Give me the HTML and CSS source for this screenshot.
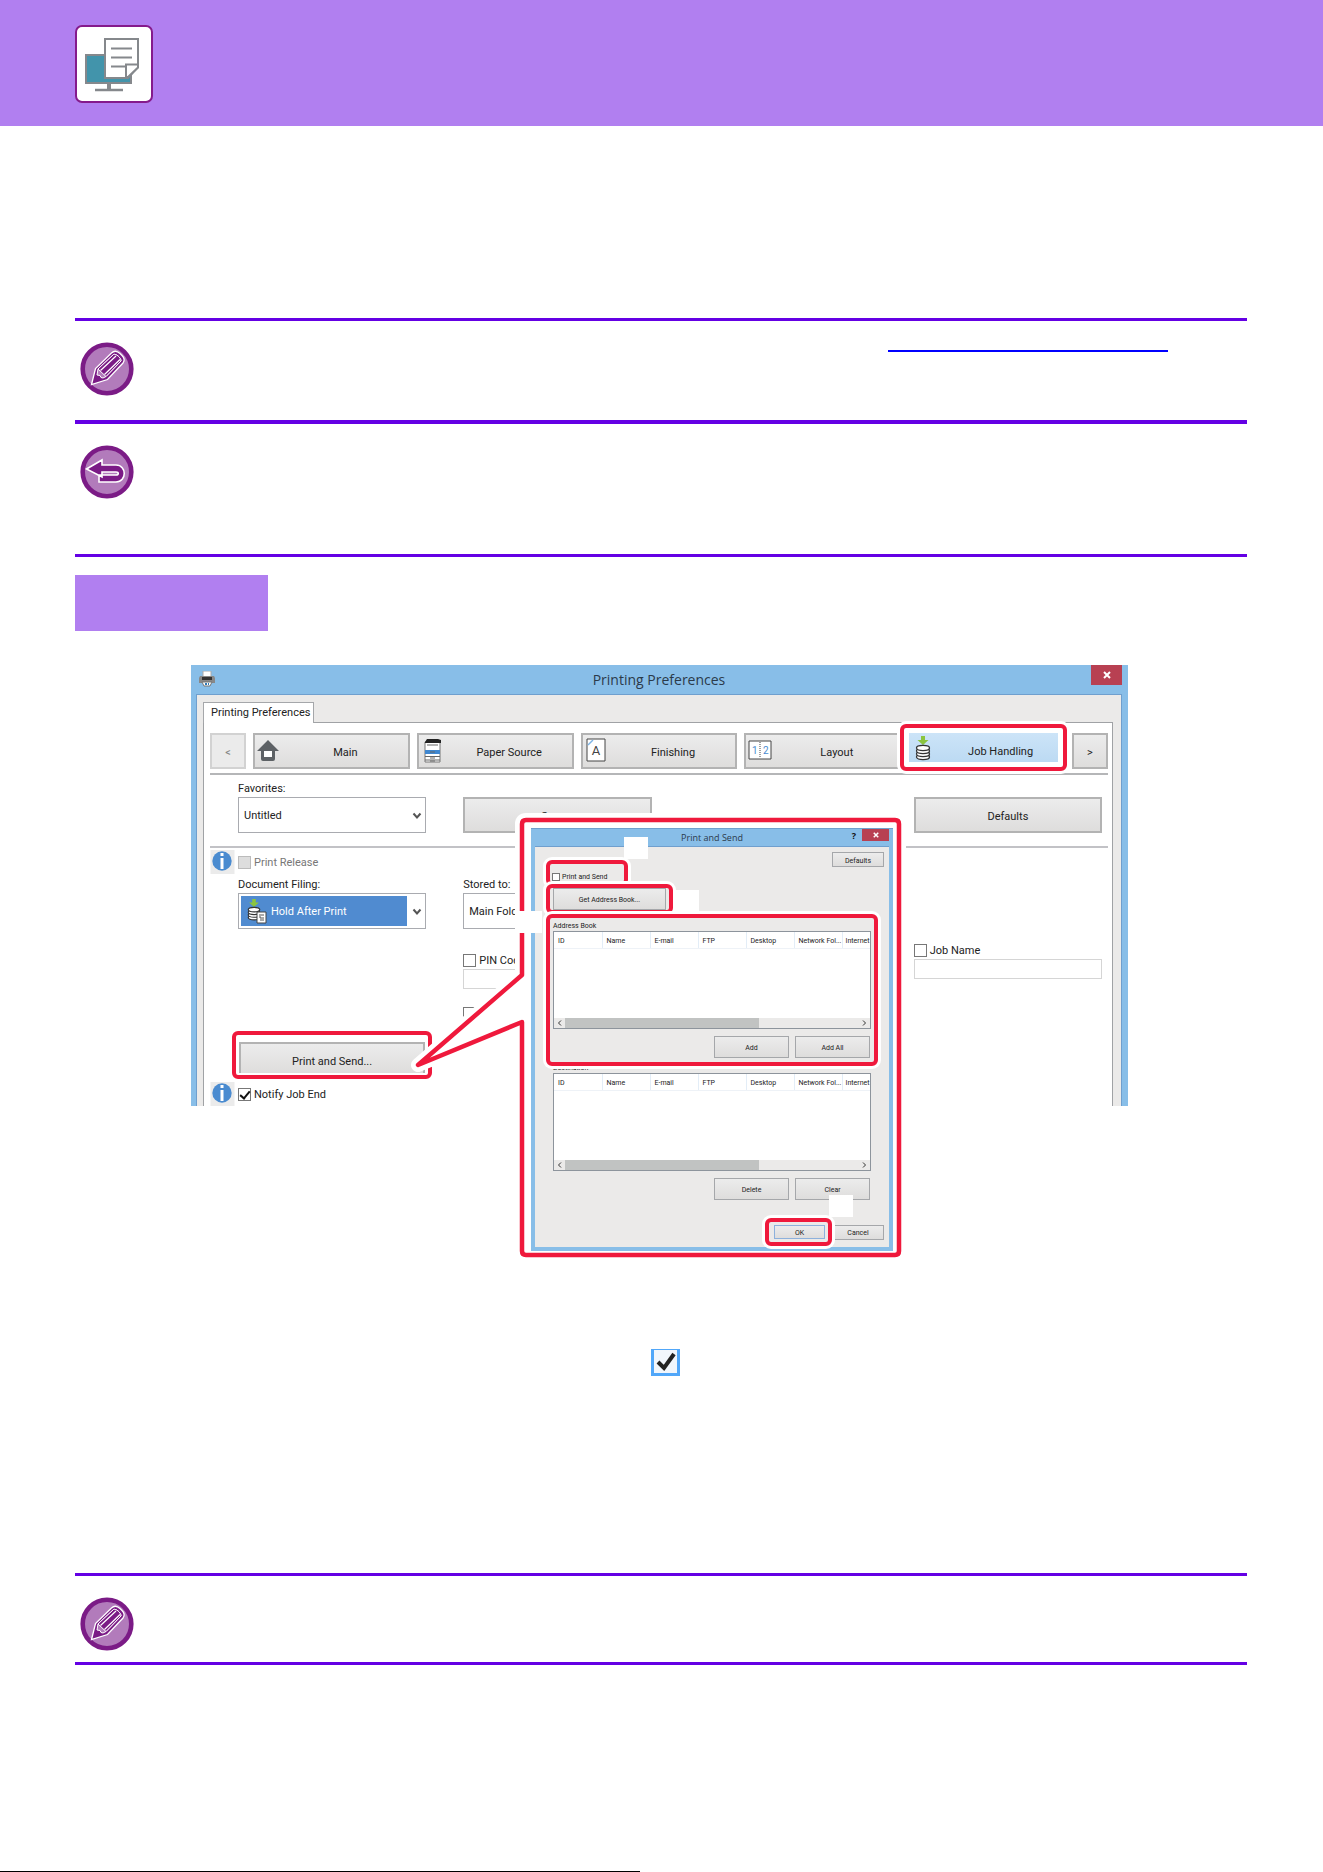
FILE: index.html
```html
<!DOCTYPE html>
<html lang="en">
<head>
  <meta charset="UTF-8" />
  <meta name="viewport" content="width=device-width, initial-scale=1.0"/>
  <title>Print and Send</title>
  <link rel="stylesheet" href="styles.css">
</head>
<body>
  <!-- Shared icons -->
  <svg class="defs" aria-hidden="true">
    <symbol id="pencil" viewBox="0 0 54 54">
      <circle cx="27" cy="27" r="24.3" fill="#b27bbb" stroke="#7b1b86" stroke-width="4.6"/>
      <path d="M11.5 42.5 15.5 26.5 31.5 11C34 8.5 37 8.7 40 11.500L42 13.500C44.500 16 44.500 19 43 21L27.500 37.500Z" fill="#7b1b86" stroke="#fff" stroke-width="1.300"/>
      <path d="M18 27 33.500 12.500C36 11.500 41 15.500 41 19L26 34.500 23 36 21 35.500 20 33.500 17 33Z" fill="#b27bbb" stroke="#fff" stroke-width="1"/>
      <path d="M18 27 33.500 12.500C36 11.500 41 15.500 41 19L26 34.500Z" fill="#7b1b86" stroke="#fff" stroke-width="1"/>
      <path d="M20.500 28.500 36 14M24.500 32.500 40 17.500" stroke="#fff" stroke-width="1.200"/>
    </symbol>
    <symbol id="info" viewBox="0 0 24 24">
      <path fill="#ebebeb" d="M0 0h24v24H0z"/>
      <circle cx="11.500" cy="11" r="9.700" fill="#4a8bd0"/>
      <path fill="#fff" d="M10 3h3v3h-3zM10 8h3v11h-3z"/>
    </symbol>
    <symbol id="disks" viewBox="0 0 18 26">
      <path fill="#8bc53f" d="M7 0h4v4h3.500L9 9 3.500 4H7z"/>
      <g fill="#fff" stroke="#333" stroke-width="1.300">
        <ellipse cx="9" cy="21" rx="6.500" ry="2.600"/>
        <ellipse cx="9" cy="18" rx="6.500" ry="2.600"/>
        <ellipse cx="9" cy="15" rx="6.500" ry="2.600"/>
        <ellipse cx="9" cy="12" rx="6.500" ry="2.600"/>
      </g>
    </symbol>
    <symbol id="chevron" viewBox="0 0 10 8">
      <path d="M1.500 1.500 5 5.500 8.500 1.500" fill="none" stroke="#555" stroke-width="2"/>
    </symbol>
  </svg>

  <header class="page-header">
    <svg class="page-icon" viewBox="0 0 78 78">
      <rect x="1" y="1" width="76" height="76" rx="6" fill="#fff" stroke="#851a8c" stroke-width="2"/>
      <rect x="11" y="30" width="45" height="28" fill="#4294ab" stroke="#85888c" stroke-width="2"/>
      <path d="M34 59v6" stroke="#85888c" stroke-width="4"/>
      <path d="M20 65h28" stroke="#85888c" stroke-width="2.500"/>
      <path d="M30 14h33v28L53 53H30z" fill="#fff" stroke="#85888c" stroke-width="2"/>
      <path d="M36 23.500h21M36 32.500h21M36 41.500h15" stroke="#85888c" stroke-width="2"/>
      <path d="M51 39.500h12v3L53 52h-2z" fill="#fff" stroke="#85888c" stroke-width="2"/>
    </svg>
  </header>

  <main>
    <section class="note note-link">
      <svg class="note-icon"><use href="#pencil"/></svg>
      <a href="#" class="ref-link" aria-label="See also"></a>
    </section>
    <section class="note note-back">
      <svg class="note-icon" viewBox="0 0 54 54">
        <circle cx="27" cy="27" r="24.300" fill="#b27bbb" stroke="#7b1b86" stroke-width="4.600"/>
        <path d="M6.500 24 22 15v5h14c11 0 11 17 0 17H19v-7h17c3 0 3-3 0-3H22v5Z" fill="#7b1b86" stroke="#fff" stroke-width="1.600"/>
      </svg>
    </section>

    <div class="section-label"></div>

    <div class="figure">
      <!-- Printer driver window -->
      <div class="window">
        <div class="titlebar">
          <svg class="printer" viewBox="0 0 16 16">
            <path d="M4 0h8v6H4z" fill="#fff" stroke="#aaa"/>
            <path d="M1 5h14l1 2v5H0V7z" fill="#888"/>
            <path d="M3 6h10v3H3z" fill="#333"/>
            <path d="M3 11h10l-2 4H5z" fill="#fff" stroke="#777"/>
            <path d="M6 12h2v2H6zM9 12h1v2H9z" fill="#3179b5"/>
          </svg>
          <span>Printing Preferences</span>
          <button class="close" aria-label="Close"><svg viewBox="0 0 8 8"><path d="m1 1 6 6M7 1 1 7"/></svg></button>
        </div>
        <div class="window-body">
          <div class="tab">Printing Preferences</div>
          <div class="panel">
            <nav class="nav">
              <button class="btn" disabled>&lt;</button>
              <button class="btn with-icon">
                <svg viewBox="0 0 24 26"><path d="M11 2 0 13h4v8q0 2 2 2h10q2 0 2-2v-8h4z" fill="#5d6165"/><path fill="#fff" d="M7 13h8v6H7z"/></svg>
                Main
              </button>
              <button class="btn with-icon">
                <svg viewBox="0 0 24 26"><path d="M4 4h15v20H4z" fill="#fff" stroke="#777"/><path d="M4 4 6 1h11l3 1v3H4z" fill="#222"/><path fill="#3f87d0" d="M4 12h15v4H4z"/><path d="M6 7h11M9 14h5M4 18.500h15M9 20h5M4 22h15M9 23h5" stroke="#666"/></svg>
                Paper Source
              </button>
              <button class="btn with-icon">
                <svg viewBox="0 0 24 26"><path d="M2 1h18v22H2z" fill="#fff" stroke="#444"/><path d="m3 7 5-5" stroke="#7db4e6" stroke-width="1.500"/><text x="11" y="17" text-anchor="middle" font-size="13" fill="#444">A</text></svg>
                Finishing
              </button>
              <button class="btn with-icon">
                <svg viewBox="0 0 24 26"><path d="M1 3h22v18H1z" fill="#fff" stroke="#444"/><path d="M12 4v16" stroke="#444" stroke-dasharray="1 1"/><text x="4" y="16" font-size="10" fill="#4a8bd0">1</text><text x="15" y="16" font-size="10" fill="#4a8bd0">2</text></svg>
                Layout
              </button>
              <div class="mark mark-job">
                <button class="btn selected">
                  <svg><use href="#disks"/></svg>
                  Job Handling
                </button>
              </div>
              <button class="btn">&gt;</button>
            </nav>

            <div class="fields favorites">
              <div>
                <label class="caption" for="favorites">Favorites:</label>
                <div class="select">
                  <select id="favorites"><option>Untitled</option></select>
                  <svg class="arrow"><use href="#chevron"/></svg>
                </div>
              </div>
              <button class="btn">Save...</button>
              <button class="btn last">Defaults</button>
            </div>

            <div class="info-row">
              <svg class="info"><use href="#info"/></svg>
              <label class="check disabled"><input type="checkbox" disabled />Print Release</label>
            </div>

            <div class="fields">
              <div>
                <label class="caption" for="filing">Document Filing:</label>
                <div class="select filing">
                  <select id="filing"><option>Hold After Print</option></select>
                  <svg class="hold" viewBox="0 0 22 26">
                    <use href="#disks" width="16" height="25"/>
                    <path d="M11 14h9v11h-9z" fill="#fff" stroke="#444"/>
                    <path d="M13 17h5M13 19h2v4M17 19v4" stroke="#555" fill="none"/>
                  </svg>
                  <svg class="arrow"><use href="#chevron"/></svg>
                </div>
              </div>
              <div>
                <label class="caption" for="stored">Stored to:</label>
                <div class="select">
                  <select id="stored"><option>Main Folder</option></select>
                  <svg class="arrow"><use href="#chevron"/></svg>
                </div>
              </div>
            </div>

            <div class="fields options">
              <div class="pin">
                <label class="check"><input type="checkbox" />PIN Code</label>
                <input type="text" class="text" aria-label="PIN Code" />
                <label class="check extra"><input type="checkbox" aria-label="Custom" /></label>
              </div>
              <div class="last">
                <label class="check"><input type="checkbox" />Job Name</label>
                <input type="text" class="text" aria-label="Job Name" />
              </div>
            </div>

            <div class="fields">
              <div class="mark mark-send"><button class="btn">Print and Send...</button></div>
            </div>

            <div class="info-row notify">
              <svg class="info"><use href="#info"/></svg>
              <label class="check"><input type="checkbox" checked />Notify Job End</label>
            </div>
          </div>
        </div>
      </div>

      <!-- Balloon with the Print and Send dialog -->
      <div class="callout">
        <svg class="balloon" viewBox="0 0 500 457">
          <path d="M120 12H489Q493 12 493 16V443Q493 447 489 447H120Q116 447 116 443V214L12 257 116 167V16Q116 12 120 12Z" fill="#fff" stroke="#fff" stroke-width="14" stroke-linejoin="round"/>
          <path d="M120 12H489Q493 12 493 16V443Q493 447 489 447H120Q116 447 116 443V214L12 257 116 167V16Q116 12 120 12Z" fill="#fff" stroke="#ef193c" stroke-width="4.500" stroke-linejoin="round"/>
        </svg>

        <div class="dialog">
          <div class="titlebar">
            <span>Print and Send</span>
            <b class="help">?</b>
            <button class="close" aria-label="Close"><svg viewBox="0 0 8 8"><path d="m1 1 6 6M7 1 1 7"/></svg></button>
          </div>
          <div class="dialog-body">
            <div class="dialog-top">
              <div class="mark mark-check">
                <label class="check"><input type="checkbox" />Print and Send</label>
              </div>
              <button class="btn small">Defaults</button>
            </div>
            <div class="mark mark-get"><button class="btn">Get Address Book...</button></div>

            <div class="mark mark-book">
              <div class="list-title">Address Book</div>
              <div class="list">
                <table>
                  <thead><tr><th>ID</th><th>Name</th><th>E-mail</th><th>FTP</th><th>Desktop</th><th>Network Fol...</th><th>Internet</th></tr></thead>
                </table>
                <div class="scroll">
                  <svg viewBox="0 0 6 8"><path d="M4 1.500 1.500 4 4 6.500"/></svg>
                  <div class="track"><div class="thumb"></div></div>
                  <svg viewBox="0 0 6 8"><path d="M2 1.500 4.500 4 2 6.500"/></svg>
                </div>
              </div>
              <div class="buttons">
                <button class="btn">Add</button>
                <button class="btn">Add All</button>
              </div>
            </div>

            <div class="destination">
              <div class="list-title">Destination</div>
              <div class="list">
                <table>
                  <thead><tr><th>ID</th><th>Name</th><th>E-mail</th><th>FTP</th><th>Desktop</th><th>Network Fol...</th><th>Internet</th></tr></thead>
                </table>
                <div class="scroll">
                  <svg viewBox="0 0 6 8"><path d="M4 1.500 1.500 4 4 6.500"/></svg>
                  <div class="track"><div class="thumb"></div></div>
                  <svg viewBox="0 0 6 8"><path d="M2 1.500 4.500 4 2 6.500"/></svg>
                </div>
              </div>
              <div class="buttons">
                <button class="btn">Delete</button>
                <button class="btn">Clear</button>
              </div>
            </div>

            <div class="dialog-footer">
              <div class="mark mark-ok"><button class="btn ok">OK</button></div>
              <button class="btn small">Cancel</button>
            </div>
          </div>
        </div>

        <span class="step step-1"></span>
        <span class="step step-2"></span>
        <span class="step step-3"></span>
        <span class="step step-4"></span>
      </div>
    </div>

    <div class="instruction">
      <svg class="tick" viewBox="0 0 29 27">
        <path d="M1.500 0v25.500h26V0" fill="#f1f6fc" stroke="#51a7f9" stroke-width="3"/>
        <path d="M0 .5h29" stroke="#51a7f9"/>
        <path d="m7 13 6 6L23 5" fill="none" stroke="#222" stroke-width="4"/>
      </svg>
    </div>

    <section class="note note-last">
      <svg class="note-icon"><use href="#pencil"/></svg>
    </section>
  </main>

  <footer class="page-footer"></footer>
</body>
</html>
```
FILE: styles.css
```css
:root {
  --purple: #b17ff0;
  --rule: #6400e4;
  --red: #ef193c;
  --sky: #88bee8;
  --face: #ebeae9;
}

* {
  margin: 0;
  padding: 0;
  box-sizing: border-box;
}

body {
  min-height: 100vh;
  display: flex;
  flex-direction: column;
  background: #fff;
  color: #222;
  font-family: Roboto, "Liberation Sans", sans-serif;
  font-size: 11px;
}

button,
input,
select {
  font: inherit;
  color: inherit;
}

svg {
  display: block;
}

.defs {
  position: absolute;
  width: 0;
  height: 0;
}

.page-header {
  background: var(--purple);
  height: 126px;
  padding: 25px 75px;
}

.page-icon {
  width: 78px;
  height: 78px;
}

main {
  flex: 1;
  padding: 192px 76px 0 75px;
}

/* Notes */
.note {
  display: flex;
  justify-content: space-between;
  align-items: flex-start;
  border-top: 3px solid var(--rule);
  padding: 21px 79px 0 5px;
}

.note-icon {
  width: 54px;
  height: 54px;
}

.note-link {
  height: 102px;
}

.note-back {
  height: 137px;
  border-top-width: 4px;
  border-bottom: 3px solid var(--rule);
}

.note-last {
  height: 92px;
  border-bottom: 3px solid var(--rule);
}

.ref-link {
  width: 280px;
  height: 10px;
  border-bottom: 2px solid #00f;
}

.section-label {
  width: 193px;
  height: 56px;
  margin-top: 18px;
  background: var(--purple);
}

/* Figure */
.figure {
  position: relative;
  max-width: 937px;
  margin: 34px auto 0 116px;
}

.window {
  background: var(--sky);
  padding: 0 6px 0 5px;
}

.titlebar {
  position: relative;
  display: flex;
  justify-content: center;
  align-items: center;
  height: 29px;
  font-family: "Open Sans", sans-serif;
  font-size: 14px;
  color: #2b3a4a;
}

.printer {
  position: absolute;
  left: 3px;
  top: 6px;
  width: 16px;
  height: 16px;
}

.close {
  position: absolute;
  right: 0;
  top: 0;
  width: 31px;
  height: 20px;
  border: 0;
  background: #b84052;
  display: grid;
  place-items: center;
}

.close svg {
  width: 8px;
  height: 8px;
  stroke: #fff;
  stroke-width: 2;
}

.window-body {
  background: var(--face);
  border: 1px solid #6f9fce;
  border-bottom: 0;
  padding: 7px 8px 0 6px;
}

.tab {
  position: relative;
  z-index: 1;
  width: 111px;
  height: 21px;
  margin-bottom: -1px;
  padding-left: 7px;
  line-height: 20px;
  white-space: nowrap;
  background: #fff;
  border: 1px solid #a5a7aa;
  border-bottom: 0;
}

.panel {
  background: #fff;
  border: 1px solid #a0a2a5;
  border-bottom: 0;
  padding: 0 4px 0 6px;
}

.nav {
  display: grid;
  grid-template-columns: 36px repeat(5, 1fr) 36px;
  gap: 7px;
  padding: 10px 0 4px;
  border-bottom: 2px solid #b5b6b8;
}

.btn {
  position: relative;
  width: 100%;
  height: 36px;
  padding-top: 2px;
  border: 2px solid #b3b3b3;
  background: linear-gradient(#ececec, #dedddc);
  text-align: center;
}

.btn:disabled {
  color: #888;
  border-color: #d2d2d2;
  background: #ebebeb;
}

.btn.with-icon {
  padding-left: 28px;
}

.btn svg {
  position: absolute;
  left: 2px;
  top: 3px;
  width: 24px;
  height: 26px;
}

.btn.selected {
  height: 29px;
  border: 0;
  padding: 7px 0 0 34px;
  background: linear-gradient(#cce4f8, #bcdaf3);
}

/* Red frames */
.mark {
  position: relative;
  z-index: 1;
  border: 4px solid var(--red);
  border-radius: 6px;
  background: #fff;
  box-shadow: 0 0 0 3px #fff;
}

.mark-job {
  height: 47px;
  margin: -9px -2px -8px -8px;
  padding: 5px;
}

.fields {
  display: grid;
  grid-template-columns: repeat(4, 1fr);
  column-gap: 37px;
  padding: 0 6px 0 28px;
}

.favorites {
  align-items: end;
  height: 73px;
  padding-bottom: 13px;
  border-bottom: 2px solid #c2c2c6;
}

.last {
  grid-column: 4;
}

.caption {
  display: block;
  height: 16px;
  line-height: 16px;
}

.select {
  position: relative;
  height: 36px;
  padding: 2px 18px 2px 2px;
  border: 1px solid #a9abb0;
}

.select select {
  width: 100%;
  height: 100%;
  padding-left: 3px;
  appearance: none;
  border: 0;
  background: #fff;
}

.filing select {
  padding-left: 30px;
  color: #fff;
  background: #508bd0;
}

.arrow {
  position: absolute;
  right: 3px;
  top: 14px;
  width: 10px;
  height: 8px;
}

.hold {
  position: absolute;
  left: 7px;
  top: 4px;
  width: 22px;
  height: 26px;
}

.info-row {
  display: flex;
  height: 29px;
  padding-top: 2px;
  gap: 3px;
}

.info {
  width: 25px;
  height: 24px;
}

.check {
  display: flex;
  align-items: center;
  gap: 3px;
  height: 24px;
  white-space: nowrap;
}

.check.disabled {
  color: #777;
}

.check input {
  flex: none;
  width: 13px;
  height: 13px;
  appearance: none;
  border: 1px solid #777;
  background: #fff;
}

.check input:disabled {
  border-color: #bbb;
  background: #ddd;
}

.check input:checked::after {
  content: "";
  display: block;
  width: 4px;
  height: 8px;
  margin-left: 3px;
  border: solid #111;
  border-width: 0 2px 2px 0;
  transform: rotate(40deg);
}

.options {
  height: 102px;
  padding-top: 14px;
}

.options .check {
  height: 15px;
}

.pin {
  grid-column: 2;
  padding-top: 10px;
}

.text {
  display: block;
  width: 100%;
  height: 20px;
  margin-top: 1px;
  border: 1px solid #d5d5d5;
}

.extra {
  margin-top: 17px;
}

.mark-send {
  height: 48px;
  margin: 0 -6px;
  padding: 7px 3px 2px;
}

.mark-send .btn {
  height: 31px;
  padding-top: 5px;
  border-bottom: 0;
}

.notify {
  height: 27px;
  padding-top: 3px;
}

/* Callout */
.callout {
  position: absolute;
  z-index: 2;
  left: 215px;
  top: 143px;
  width: 500px;
  height: 457px;
  padding: 20px 0 0 125px;
}

.balloon {
  position: absolute;
  inset: 0;
  width: 100%;
  height: 100%;
}

.dialog {
  position: relative;
  width: 362px;
  padding: 0 4px 4px;
  background: var(--sky);
  border-top: 1px solid #6f9fce;
  font-size: 7px;
}

.dialog .titlebar {
  height: 17px;
  font-size: 9px;
}

.dialog .close {
  width: 27px;
  height: 12px;
}

.dialog .close svg {
  width: 6px;
  height: 6px;
}

.help {
  position: absolute;
  right: 33px;
  top: 0;
  color: #111;
}

.dialog-body {
  background: var(--face);
  border-top: 1px solid #6f9fce;
  padding: 5px 5px 1px 11px;
}

.dialog .mark {
  background: var(--face);
}

.dialog .btn {
  height: 22px;
  border-width: 1px;
  border-color: #a5a7aa;
}

.dialog .btn.small {
  width: 52px;
  height: 15px;
}

.dialog .check {
  height: 8px;
  gap: 2px;
}

.dialog .check input {
  width: 8px;
  height: 8px;
}

.dialog-top {
  display: flex;
  justify-content: space-between;
  height: 32px;
}

.mark-check {
  width: 82px;
  height: 26px;
  margin-top: 8px;
  padding: 9px 2px 0;
}

.mark-get {
  width: 127px;
  height: 30px;
  padding: 0 3px;
}

.mark-book {
  width: 332px;
  height: 152px;
  padding: 3px;
}

.list-title {
  height: 10px;
  line-height: 10px;
}

.list {
  display: flex;
  flex-direction: column;
  justify-content: space-between;
  height: 98px;
  border: 1px solid #8d949c;
  background: #fff;
}

.list table {
  width: 100%;
  table-layout: fixed;
  border-collapse: collapse;
}

.list th {
  width: 48px;
  height: 16px;
  padding: 2px 0 0 4px;
  font-weight: normal;
  text-align: left;
  white-space: nowrap;
  border-right: 1px solid #e3edf7;
  border-bottom: 1px solid #eef2f7;
}

.list th:last-child {
  width: auto;
  padding-left: 3px;
  border-right: 0;
}

.scroll {
  display: flex;
  align-items: center;
  height: 10px;
  padding: 0 3px;
  gap: 2px;
  background: var(--face);
}

.scroll svg {
  width: 6px;
  height: 8px;
  fill: none;
  stroke: #333;
}

.track {
  flex: 1;
  height: 10px;
}

.thumb {
  width: 66%;
  height: 100%;
  background: #c1c3c2;
}

.buttons {
  display: grid;
  grid-template-columns: 75px 75px;
  justify-content: end;
  gap: 6px;
  padding-right: 1px;
  margin-top: 7px;
}

.destination {
  width: 318px;
  margin: -3px 0 0 7px;
}

.dialog-footer {
  display: flex;
  justify-content: flex-end;
  align-items: center;
  height: 28px;
  margin-top: 18px;
}

.mark-ok {
  width: 67px;
  height: 28px;
  padding: 3px 3px 3px 5px;
}

.dialog .btn.ok {
  height: 14px;
  border-color: #8db1dc;
}

.step {
  position: absolute;
  z-index: 3;
  width: 24px;
  height: 22px;
  background: #fff;
}

.step-1 {
  left: 218px;
  top: 29px;
}

.step-2 {
  left: 269px;
  top: 82px;
}

.step-3 {
  left: 112px;
  top: 103px;
}

.step-4 {
  left: 423px;
  top: 387px;
}

.instruction {
  display: flex;
  justify-content: center;
  padding: 243px 0 0 8px;
}

.tick {
  width: 29px;
  height: 27px;
}

.note-last {
  margin-top: 197px;
}

.page-footer {
  width: 640px;
  height: 1px;
  background: #000;
}
```
